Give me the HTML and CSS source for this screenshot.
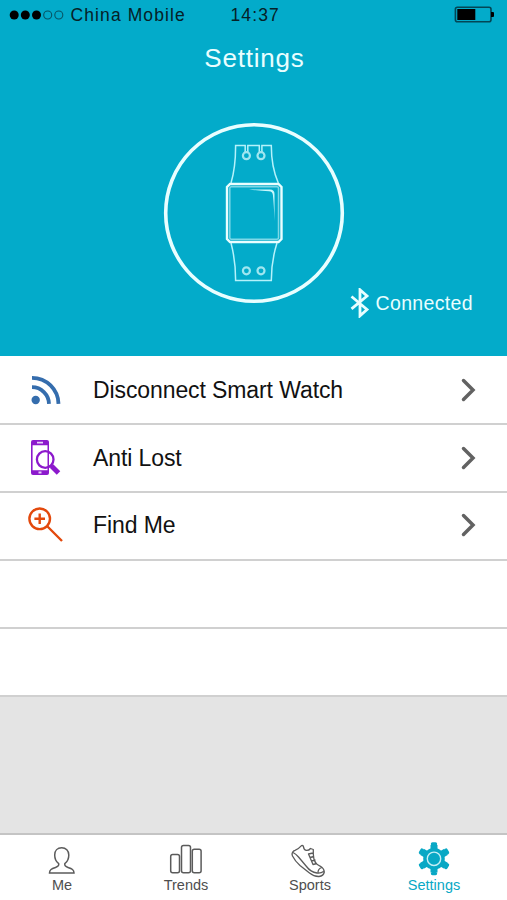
FILE: index.html
```html
<!DOCTYPE html>
<html lang="en">
<head>
<meta charset="utf-8">
<title>Settings</title>
<link rel="stylesheet" href="styles.css">
</head>
<body>
<div class="app">
  <header class="hero">
    <div class="status">
      <svg class="signal" width="56" height="12" viewBox="8 8 56 12">
        <circle cx="14.200" cy="14" r="4.500"/><circle cx="25.300" cy="14" r="4.500"/><circle cx="36.500" cy="14" r="4.500"/>
        <circle class="empty" cx="47.700" cy="14" r="4"/><circle class="empty" cx="58.800" cy="14" r="4"/>
      </svg>
      <span class="carrier">China Mobile</span>
      <span class="clock">14:37</span>
      <svg class="battery" width="42" height="18" viewBox="453 6 42 18">
        <rect class="case" x="455.400" y="7.200" width="35.600" height="14.600" rx="2"/>
        <rect x="457.300" y="9" width="18" height="11"/>
        <path d="M491 12h2q1 0 1 1v3q0 1-1 1h-2z"/>
      </svg>
    </div>
    <h1 class="title">Settings</h1>
    <svg class="watch" width="184" height="184" viewBox="162 121 184 184">
      <circle class="ring" cx="254" cy="213" r="88.300"/>
      <path class="strap" d="M231 183q4.700-16 4.600-37.500h9.600v6.500M247.800 152v-6.500h11.500v6.500M261.900 152v-6.500h9.400q0 21.500 7 37.500M231 243q4.700 18 4.600 37.500h35.700q0-19.500 5.700-37.500"/>
      <g class="pins"><circle cx="246.400" cy="155.700" r="3.500"/><circle cx="261" cy="155.700" r="3.500"/><circle cx="246.400" cy="270.800" r="3.500"/><circle cx="261" cy="270.800" r="3.500"/></g>
      <path class="case" d="M230 184h48.500l3 3v52l-3 3h-48.500l-3-3v-52z"/>
      <rect class="glass" x="229.800" y="186.800" width="48.700" height="52.500" rx="1.500"/>
      <path class="shine" d="M249 189.500h21q4.500 0 4.500 4.500v27q-.6-17-1.600-26-.3-3.500-4-3.800-8-.3-19.900-1.700z"/>
    </svg>
    <div class="connection">
      <svg width="20" height="30" viewBox="350 288 20 30"><path d="M351.500 296.500l15.500 13-7 6.300v-26l7 6.200-15.500 12.800"/></svg>
      <span>Connected</span>
    </div>
  </header>
  <main class="list">
    <div class="row">
      <svg class="icon" width="38" height="44" viewBox="27 368 38 44">
        <g class="blue"><circle class="dot" cx="35.700" cy="400" r="4.200"/><path d="M32 387.200a17 17 0 0 1 17 16.700M32 377.800a26.500 26.500 0 0 1 26.500 26.100"/></g>
      </svg>
      <span class="label">Disconnect Smart Watch</span>
      <svg class="chevron" width="16" height="26" viewBox="0 0 16 26"><path d="M2.500 3.500l9.500 9.500-9.500 9.500"/></svg>
    </div>
    <div class="row">
      <svg class="icon" width="38" height="44" viewBox="27 436 38 44">
        <path class="phone" fill-rule="evenodd" d="M33 440h14q2 0 2 2v31q0 2-2 2h-14q-2 0-2-2v-31q0-2 2-2zM32.600 445.200v25.100h14.900v-25.100z"/>
        <path class="detail" d="M37 442.600h6M38.500 472.500h3"/>
        <circle class="lens" cx="45.200" cy="459.500" r="8.300"/>
        <path class="handle" d="M50.500 465l2 2"/><path class="grip" d="M51.500 466l7 7"/>
      </svg>
      <span class="label">Anti Lost</span>
      <svg class="chevron" width="16" height="26" viewBox="0 0 16 26"><path d="M2.500 3.500l9.500 9.500-9.500 9.500"/></svg>
    </div>
    <div class="row find">
      <svg class="icon" width="38" height="44" viewBox="27 503 38 44">
        <g class="orange"><circle cx="39.700" cy="518.800" r="10.300"/><path d="M39.700 513.500v10.600M34.400 518.800h10.600M47 526l15 15"/></g>
      </svg>
      <span class="label">Find Me</span>
      <svg class="chevron" width="16" height="26" viewBox="0 0 16 26"><path d="M2.500 3.500l9.500 9.500-9.500 9.500"/></svg>
    </div>
    <div class="row"></div>
    <div class="row"></div>
  </main>
  <nav class="tabs">
    <a class="tab">
      <svg width="40" height="38" viewBox="42 840 40 38"><path d="M61.700 847.800c-4.200 0-7 3-7 7.200 0 3.800 1.500 6.800 4 8.700.5 2.300-.8 3-3.200 3.800-4 1.300-6 2.200-6 5.500h24.500c0-3.300-2-4.200-6-5.500-2.400-.8-3.700-1.500-3.200-3.800 2.500-1.900 4-4.900 4-8.700 0-4.200-2.900-7.200-7.100-7.200z"/></svg>
      <span>Me</span>
    </a>
    <a class="tab">
      <svg width="40" height="38" viewBox="166 840 40 38"><rect x="170.700" y="854.500" width="8.800" height="18.300" rx="2"/><rect x="181.500" y="845.500" width="9" height="27.300" rx="2"/><rect x="192.300" y="849.300" width="8.800" height="23.500" rx="2"/></svg>
      <span>Trends</span>
    </a>
    <a class="tab">
      <svg class="shoe" width="40" height="38" viewBox="290 840 40 38"><path d="M292 854q.5-3 3-3.700 3.500-1.300 6.500-4.700 1.500-.5 2 1.200.5 3.500 3 3.600 2.500.1 4-1.900l2.800 1v4.700q0 5.500 2.700 9.300 2 1.700 4.500 2.800 3.500 2 3.800 5.700-.8 4-5.300 4.500-5 .2-9.500-3.500l-9.500-7.500q-5-4.500-7.500-9.500zM293 852.500q3 1.500 5.500 4.500l8 9.500q4 5.500 10.500 6.500 4 .5 6.500-1.500M313 853l-4.500 1 1.500 3.500 4-1M310 857.500l1.500 3.500 4-1M311.500 861l1.500 3.500 4-1M318 872.500q0-3.500 3.500-5"/></svg>
      <span>Sports</span>
    </a>
    <a class="tab active">
      <svg width="40" height="38" viewBox="414 840 40 38"><g class="teeth"><path d="M434 845v27.600M422 851.900l24 13.800M446 851.900l-24 13.800"/><path class="cap" d="M432.500 844h3M432.500 873.600h3M420.500 852.700l1.500-2.600M446 867.500l1.500-2.600M446 850.100l1.500 2.600M420.500 864.900l1.500 2.600"/></g><circle class="hub" cx="434" cy="858.800" r="10.800"/><circle class="hole" cx="434" cy="858.800" r="6.700"/></svg>
      <span>Settings</span>
    </a>
  </nav>
</div>
</body>
</html>
```
FILE: styles.css
```css
* { box-sizing: border-box; }
body { margin: 0; font-family: "Liberation Sans", Arial, sans-serif; }
svg { display: block; fill: none; flex: none; }
.app { width: 507px; height: 900px; display: flex; flex-direction: column; background: #e4e4e4; overflow: hidden; }

.hero { height: 356px; background: #03abca; color: #e9feff; display: flex; flex-direction: column; align-items: center; flex: none; }
.status { width: 100%; height: 29px; padding: 1px 12px 0 8px; display: flex; align-items: center; color: #062127; font-size: 17.5px; letter-spacing: 1.1px; }
.signal, .battery { fill: #000; }
.signal .empty { fill: none; stroke: #075464; stroke-width: 1.1; }
.carrier { width: 160px; margin-left: 6.5px; }
.battery { margin-left: auto; }
.battery .case { fill: none; stroke: #034655; stroke-width: 1.6; }
.title { margin: 14px 0 0 2px; font-size: 26px; line-height: 30px; font-weight: 400; letter-spacing: .8px; }
.watch { margin-top: 48px; stroke: #e9feff; }
.ring { stroke-width: 3.6; }
.strap { stroke-width: 1.5; stroke: #b5f2fb; }
.pins { stroke-width: 2.2; stroke: #a0e6f0; }
.watch .case { stroke-width: 2.4; }
.glass { stroke-width: 1.5; stroke: #7ed8e7; }
.shine { fill: #c9f7fc; stroke: none; }
.connection { align-self: flex-end; margin: -17px 34px 0 0; display: flex; align-items: center; gap: 6px; font-size: 19.5px; letter-spacing: .35px; }
.connection svg { stroke: #e9feff; stroke-width: 2.8; }

.list { background: #fff; padding-top: 1px; }
.row { height: 68px; border-bottom: 2px solid #d0d0d0; display: flex; align-items: center; padding: 0 30px 0 27px; }
.find { padding-bottom: 2px; }
.icon { margin-right: 27px; }
.label { flex: 1; font-size: 23px; letter-spacing: -.1px; color: #111; padding-left: 1px; }
.chevron { stroke: #626262; stroke-width: 3.5; stroke-linecap: round; }
.blue { stroke: #356dad; stroke-width: 3.8; }
.dot { fill: #356dad; stroke: none; }
.phone { fill: #8c19cc; }
.detail { stroke: #ead0f7; stroke-width: 1.8; }
.lens { stroke: #8c19cc; stroke-width: 2.3; }
.handle { stroke: #8c19cc; stroke-width: 2.5; }
.grip { stroke: #8c19cc; stroke-width: 5; }
.orange { stroke: #e3490d; stroke-width: 2.4; }

.tabs { margin-top: auto; height: 67px; background: #fff; border-top: 2px solid #c4c4c4; display: flex; padding-right: 11px; }
.tab { flex: 1; display: flex; flex-direction: column; align-items: center; padding-top: 5px; font-size: 14.5px; line-height: 16px; color: #4e4e4e; }
.tab svg { stroke: #5b5b5b; stroke-width: 1.5; }
.tab .shoe { stroke-width: 1.3; stroke-linejoin: round; }
.tab span { margin-top: -1px; }
.tab.active { color: #08a8c5; }
.tab .teeth { stroke: #08a8c5; stroke-width: 7; }
.tab .cap { stroke-width: 3.4; stroke-linecap: round; }
.tab .hub { fill: #08a8c5; stroke: none; }
.tab .hole { stroke: #c6eef5; stroke-width: 1.4; }
```
